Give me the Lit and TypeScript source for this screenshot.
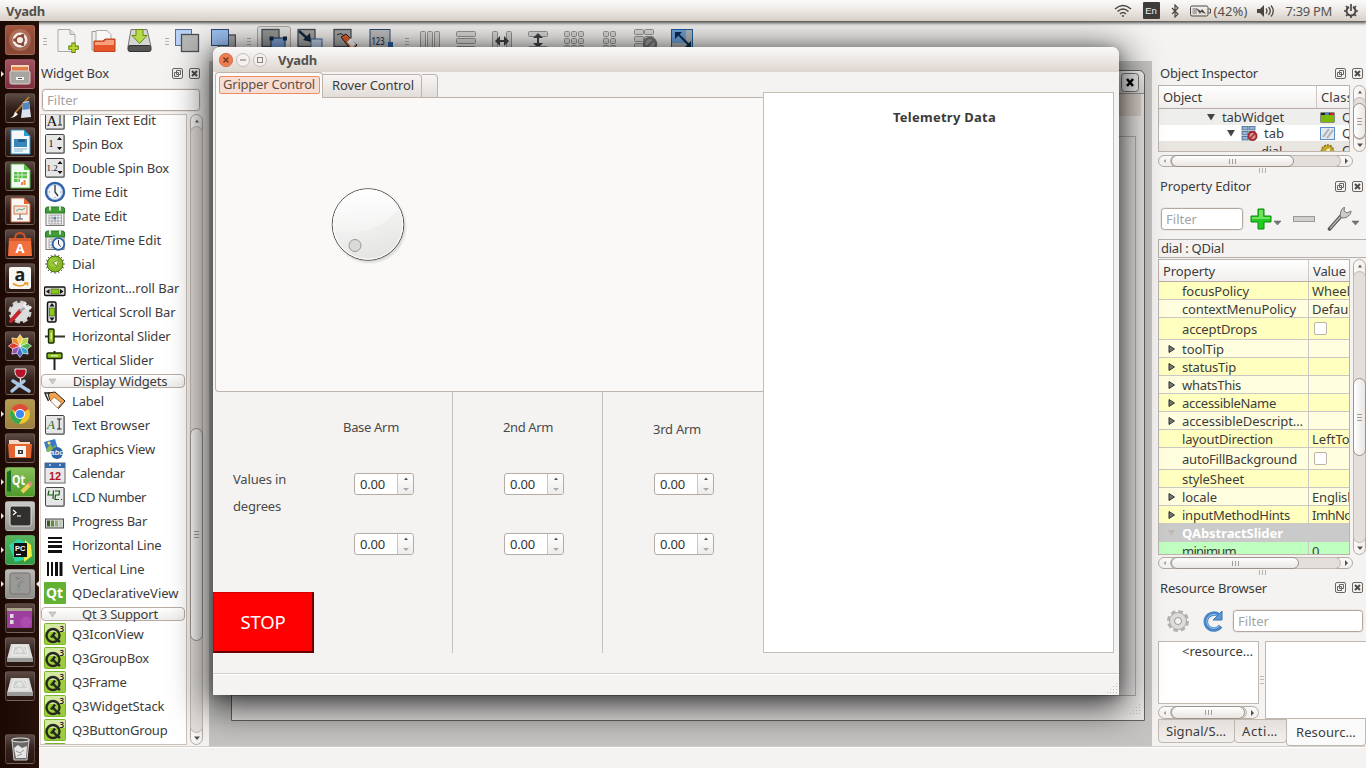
import { LitElement, html, css, svg, nothing } from "lit";
import { customElement, property, query } from "lit/decorators.js";
import { styleMap } from "lit/directives/style-map.js";
import { classMap } from "lit/directives/class-map.js";

/** A single line of text whose tracking is tuned so that it spans `w` pixels. */
@customElement("ui-text")
class UiText extends LitElement {
  @property({ type: Number }) w = 0;
  @property() t = "";
  @query("span") span!: HTMLSpanElement;
  static styles = css`
    :host { display: inline-block; white-space: pre; flex: none; }
    span { display: inline-block; white-space: pre; }
  `;
  firstUpdated() {
    if (!this.w) return;
    const natural = this.span.getBoundingClientRect().width;
    this.span.style.letterSpacing = (this.w - natural) / this.t.length + "px";
  }
  render() { return html`<span>${this.t}</span>`; }
}

const tx = (t: string, w = 0, cls = "") => html`<ui-text class=${cls} .t=${t} .w=${w}></ui-text>`;

/* 22px icons of the widget list */
const wrap22 = (body: unknown) => html`<svg class="wi" width="22" height="22" viewBox="0 0 22 22">${body}</svg>`;
const card = svg`<rect x="1.5" y="1.5" width="19.500" height="19.500" rx="1.5" fill="#aaa"/><rect x="1.5" y="1.5" width="18.500" height="18.500" rx="1" fill="#e6e6e6" stroke="#444"/>`;
const calGrid = svg`<rect x="2" y="4" width="18" height="16.5" fill="#f4f4f4" stroke="#777"/><path d="M1.5 8V4q0-2 2-2h15q2 0 2 2v4z" fill="#3f9d35" stroke="#2c7a25"/><path d="M6 .5v5M16 .5v5" stroke="#ddd" stroke-width="2"/><path d="M5 10h13M5 13h13M5 16h13M5 19h13M5 10v9M8 10v9M11 10v9M14 10v9M17.500 10v9" stroke="#999" stroke-width=".8"/>`;
const icons: Record<string, unknown> = {
  plain: svg`${card}<text x="2.500" y="16.500" font-family="Liberation Serif" font-size="15" fill="#111">A</text><path d="M14 5h4M16 5v11M14 16h4" stroke="#222" fill="none"/>`,
  spin: svg`${card}<text x="4.500" y="14" font-family="Liberation Serif" font-size="10" fill="#111">1</text><path d="M13 7l2.500-3 2.500 3zM13 14l2.500 3 2.500-3z" fill="#111"/>`,
  dspin: svg`${card}<text x="2.500" y="14" font-family="Liberation Serif" font-size="9" fill="#111">1.2</text><path d="M13.500 7l2.500-3 2.500 3zM13.500 14l2.500 3 2.500-3z" fill="#111"/>`,
  time: svg`<circle cx="11" cy="11" r="9" fill="#f3f6fa" stroke="#2d62a4" stroke-width="2.400"/><circle cx="11" cy="11" r="7.500" fill="none" stroke="#9ab8dc" stroke-width=".8"/><path d="M11 4v7l3 4" stroke="#333" stroke-width="1.300" fill="none"/><path d="M5 11h1M16 11h1M11 16v1" stroke="#777"/>`,
  date: svg`${calGrid}<rect x="9.500" y="12" width="2.500" height="2.500" fill="#4d86d6"/>`,
  datetime: svg`${calGrid}<circle cx="14.500" cy="15" r="5.800" fill="#f3f6fa" stroke="#2d62a4" stroke-width="1.800"/><path d="M14.500 11v4l2 2.500" stroke="#333" fill="none"/>`,
  dial: svg`<g stroke="#555" stroke-width=".9"><path d="M11 1v20M1 11h20M4 4l14 14M18 4L4 18M7 2l8 18M15 2L7 20M2 7l18 8M2 15l18-8"/></g><circle cx="11" cy="11" r="8" fill="#88bb22" stroke="#4d6f10"/><circle cx="10" cy="9.500" r="5" fill="#a4cf48" opacity=".7"/><path d="M14.500 7l-2 6.500-1.500-2.500-2.500-1z" fill="#eef8cc" stroke="#55741a" stroke-width=".6"/>`,
  hscroll: svg`<rect x=".5" y="10" width="20.500" height="8.500" rx="1" fill="#ddd" stroke="#111" stroke-width="1.300"/><path d="M5.500 12v5L2 14.500zM16 12v5l3.500-2.500z" fill="#111"/><rect x="7" y="12" width="8" height="5" fill="#8cc61c" stroke="#335500" stroke-width=".6"/>`,
  vscroll: svg`<rect x="3.500" y="1" width="8.500" height="20" rx="1.500" fill="#ddd" stroke="#111" stroke-width="1.500"/><path d="M5.500 5.500h5L8 2zM5.500 16.500h5L8 20z" fill="#111"/><rect x="5.500" y="7" width="5" height="8" fill="#8cc61c" stroke="#335500" stroke-width=".6"/>`,
  hslider: svg`<path d="M1 11.500h20" stroke="#333" stroke-width="2"/><rect x="4.500" y="4" width="5.500" height="14" rx="1" fill="#8fbf26" stroke="#1d2b00" stroke-width="1.400"/><path d="M7.200 7.500v7" stroke="#e8f6b8" stroke-width="1.200"/>`,
  vslider: svg`<path d="M10.500 2v19" stroke="#222" stroke-width="2"/><rect x="3" y="4" width="15" height="5.500" rx="1" fill="#8fbf26" stroke="#1d2b00" stroke-width="1.400"/><path d="M7 6.800h7" stroke="#e8f6b8" stroke-width="1.200"/>`,
  label: svg`<path d="M4 3l7-1 10 9-6.500 7.500-9-9z" fill="#f0a24c" stroke="#222"/><path d="M10 7l7.500 6-4 5-7-7z" fill="#fff" stroke="#a85a1c" stroke-width=".7"/><path d="M4.500 11Q2 6 1 3h5" stroke="#222" stroke-width="1.400" fill="none"/>`,
  browser: svg`${card}<text x="3" y="15" font-family="Liberation Serif" font-style="italic" font-size="13" fill="#1d6b22">A</text><path d="M13 5h4.500M15.200 5v10M13 15h4.500" stroke="#222" fill="none"/>`,
  gview: svg`<path d="M0 4l11-3 3 10-11 3z" fill="#3a78c8"/><path d="M2 12l4-6 3 4 2-3 3 4-11 3z" fill="#8bb84a"/><circle cx="5" cy="5" r="1.500" fill="#ffe36b"/><circle cx="13" cy="15" r="6" fill="#2d62a4"/><text x="6" y="17" font-family="Liberation Sans" font-style="italic" font-size="8" font-weight="bold" fill="#dfe9f5">abc</text>`,
  calendar: svg`<rect x="1" y="1" width="20" height="20" fill="#e9e9e9" stroke="#666"/><rect x="1" y="1" width="20" height="5" fill="#3469ad"/><path d="M5 3h2M15 3h2" stroke="#cfdded" stroke-width="1.500"/><text x="5" y="17.500" font-family="Liberation Sans" font-weight="bold" font-size="11" fill="#b5151c">12</text>`,
  lcd: svg`${card}<path d="M5 4.500l-1 4.500h5M9.500 4.500L9 13M11 5h4.500L15 9H11.500L11 13.500h4M17.500 13v1" stroke="#155a18" stroke-width="1.200" fill="none"/>`,
  progress: svg`<rect x="1.500" y="9" width="18" height="9" fill="#d4d8d0" stroke="#444"/><rect x="3" y="10.500" width="3" height="6" fill="#3f5c1e"/><rect x="7" y="10.500" width="3" height="6" fill="#66884a"/><rect x="11" y="10.500" width="3" height="6" fill="#92ac80"/><rect x="15" y="10.500" width="3" height="6" fill="#bccbb2"/>`,
  hline: svg`<path d="M4 4h14M4 8h14" stroke="#111" stroke-width="1.800"/><path d="M4 12.500h14M4 17.500h14" stroke="#111" stroke-width="3"/>`,
  vline: svg`<path d="M4 4v14M8 4v14" stroke="#111" stroke-width="2"/><path d="M12.500 4v14M17 4v14" stroke="#111" stroke-width="3"/>`,
  qt: svg`<rect width="22" height="22" rx="1" fill="#62b132"/><text x="2" y="16" font-family="Noto Sans" font-weight="bold" font-size="15" textLength="17" lengthAdjust="spacingAndGlyphs" fill="#fff">Qt</text>`,
  q3: svg`<rect x=".5" y=".5" width="21" height="21" rx="1" fill="#9ccb3b" stroke="#7db32a"/><rect x="1" y="1" width="20" height="8" fill="#d3e8a2"/><circle cx="9" cy="12.500" r="6.500" fill="none" stroke="#242820" stroke-width="2.400"/><path d="M7 14.500l4-5M9 12.500l2.500 3L16 19" stroke="#242820" stroke-width="2.400" fill="none"/><text x="15.500" y="8.500" font-family="Noto Sans" font-weight="600" font-size="8" fill="#222">3</text>`,
};

/* launcher tiles, 30px */
const L: Record<string, { bg: string; body: unknown; run?: boolean }> = {
  ubuntu: { bg: "linear-gradient(#a4553c,#8d4633 50%,#8b4937)", body: svg`<circle cx="15" cy="15" r="11" fill="#dcb5a2" opacity=".3"/><circle cx="15" cy="15" r="7.500" fill="#f6ece7"/><circle cx="15" cy="15" r="4" fill="none" stroke="#8d4633" stroke-width="1.800"/><g fill="#8d4633"><circle cx="9.800" cy="15" r="1.700"/><circle cx="17.600" cy="10.500" r="1.700"/><circle cx="17.600" cy="19.500" r="1.700"/></g>` },
  files: { bg: "linear-gradient(#a55360,#7c2d3c)", run: true, body: svg`<path d="M6 6h18v8H6z" fill="#f2d5b8"/><path d="M7 8h16v6H7z" fill="#e07c45"/><rect x="5" y="12" width="20" height="13" rx="1.500" fill="#a8a5a0" stroke="#d6d4d0"/><path d="M11 18h8v3h-8z" fill="#eee"/><path d="M13 19.500h4" stroke="#555"/>` },
  gimp: { bg: "", body: svg`<path d="M10 20L24 4" stroke="#b97f3d" stroke-width="1.800"/><path d="M4 25q4 0 6-6l3 2q-3 4-9 4" fill="#f4f4f4"/><path d="M18 9l6-1 2 16-10 1z" fill="#dde3ea"/><path d="M18 10l6-1 .7 7-7.200 1z" fill="#5487c0"/>` },
  writer: { bg: "", body: svg`<path d="M6 3h13l6 6v18H6z" fill="#f5f7f9" stroke="#2d8fc9"/><path d="M19 3l6 6h-6z" fill="#2b9cd8"/><rect x="9" y="12" width="13" height="8" fill="#3a88bb"/><path d="M13 12h7v3h-7z" fill="#235f8c"/><path d="M9 22h13M9 24h9" stroke="#85b7d6"/>` },
  calc: { bg: "", body: svg`<path d="M6 3h13l6 6v18H6z" fill="#f5f9f3" stroke="#54b948"/><path d="M19 3l6 6h-6z" fill="#54c53b"/><path d="M9 11h13v10H9z" fill="#5fbf4c"/><path d="M9 14h13M9 17.500h13M13 11v10M17 11v10" stroke="#eaf8e6" stroke-width=".8"/><path d="M15 18h7v6h-7z" fill="#fff"/><path d="M16 24v-3h2v3zM18.500 24v-5h2v5z" fill="#f0803c"/>` },
  impress: { bg: "", body: svg`<path d="M6 3h13l6 6v18H6z" fill="#faf6f3" stroke="#c36138"/><path d="M19 3l6 6h-6z" fill="#e56530"/><rect x="9" y="11" width="13" height="8" fill="#f7e4d8" stroke="#cf7a50"/><path d="M15 19v5M12 24h6" stroke="#556"/><path d="M11 16l3-2 3 1 3-2" stroke="#5a8" fill="none"/>` },
  software: { bg: "", body: svg`<path d="M10 10q0-6 5-6t5 6" stroke="#c8542b" stroke-width="2" fill="none"/><path d="M4 9h22l1 18H3z" fill="#f0703e"/><path d="M4 9h22v3H4z" fill="#d45a2b"/><text x="10.500" y="23.500" font-family="Noto Sans" font-weight="bold" font-size="13" fill="#fff">A</text>` },
  amazon: { bg: "", body: svg`<rect x="4" y="4" width="22" height="22" rx="2" fill="#f7f7f5"/><text x="9.500" y="18" font-family="Noto Sans" font-weight="bold" font-size="18" fill="#222">a</text><path d="M8 20.500q7 5 13 0M19 20h3.500v2.500" stroke="#f29a1f" stroke-width="1.600" fill="none"/>` },
  settings: { bg: "", body: svg`<circle cx="15" cy="15" r="10" fill="none" stroke="#cfcfcf" stroke-width="3" stroke-dasharray="5 2.850"/><circle cx="15" cy="15" r="9.500" fill="#dcdcdc"/><path d="M6 24l9-10" stroke="#c6252b" stroke-width="4" stroke-linecap="round"/><path d="M15 14l6-4" stroke="#aaa" stroke-width="2.500"/><path d="M21 5.500q-3 3 0 5t5-1" stroke="#eee" stroke-width="2.500" fill="none"/>` },
  photos: { bg: "", body: svg`${[["#f7c948", 0], ["#f08a24", 315], ["#dd3c2c", 270], ["#9a4fb0", 225], ["#4a68c8", 180], ["#37a8cf", 135], ["#52b54d", 90], ["#b6d54b", 45]].map(([c, a]) => svg`<path d="M15 15l-3.200-7 3.200-4.500 3.200 4.500z" fill=${c} stroke="#fff" stroke-width=".6" transform="rotate(${a} 15 15)"/>`)}` },
  wine: { bg: "", body: svg`<path d="M10 4h11q1 8-5.500 9Q9 12 10 4z" fill="#b3132b" stroke="#eee"/><path d="M15.500 13v8" stroke="#eee" stroke-width="1.500"/><path d="M7 26L19 16M24 26L8 16" stroke="#a9c7e2" stroke-width="3.500" stroke-linecap="round"/>` },
  chrome: { bg: "linear-gradient(#b49a4e,#9d8340)", run: true, body: svg`<circle cx="15" cy="15" r="10" fill="#f0c52f"/><path d="M15 15L6.340 10A10 10 0 0 1 23.660 10z" fill="#dd4b3a"/><path d="M6.340 10A10 10 0 0 0 14 25l4.500-8-7.500 1z" fill="#35a852"/><circle cx="15" cy="15" r="5" fill="#fff"/><circle cx="15" cy="15" r="4" fill="#4285f4"/>` },
  shot: { bg: "", body: svg`<path d="M4 7h9l2 2h10v5H4z" fill="#f3d7c3"/><path d="M3 11h24l-1 14H4z" fill="#e2642f"/><rect x="10" y="13" width="11" height="11" fill="#f6f4f1"/><path d="M13 17h5v4h-5z" fill="#333"/><circle cx="15.500" cy="19" r="1" fill="#eee"/>` },
  qtc: { bg: "linear-gradient(#86c058,#4f9b2c)", run: true, body: svg`<path d="M2 5l4-2v22l-4-1z" fill="#1d6b22"/><text x="7" y="18" font-family="Noto Sans" font-size="15" font-weight="bold" textLength="13" lengthAdjust="spacingAndGlyphs" fill="#fff">Qt</text><path d="M17 25l8-8" stroke="#f0cf58" stroke-width="4"/><path d="M24 18l2.500-2.500" stroke="#d98c7a" stroke-width="4"/>` },
  term: { bg: "linear-gradient(#c9c9c7,#94928e)", run: true, body: svg`<rect x="5" y="5" width="21" height="20" rx="2" fill="#31302c" stroke="#ddd"/><path d="M8 9l3 2.500L8 14M12 15h4" stroke="#fff" stroke-width="1.200" fill="none"/>` },
  pycharm: { bg: "linear-gradient(#58b35c,#2f9c46)", run: true, body: svg`<path d="M4 10l9-6 8 3 5 7-3 10-13 3z" fill="#2fd6a4"/><path d="M20 5l6 5 1 11-8 6z" fill="#f3ee3f"/><rect x="9" y="8" width="13" height="14" fill="#111"/><text x="10" y="15.500" font-family="Liberation Sans" font-weight="bold" font-size="7.500" fill="#fff">PC</text><path d="M11 19.500h5" stroke="#fff" stroke-width="1.200"/>` },
  unknown: { bg: "linear-gradient(#bcbab7,#8f8d8a)", run: true, body: svg`<rect x="5" y="4" width="20" height="21" rx="2" fill="#9b9996" stroke="#777572"/><text x="10.500" y="21" font-family="Noto Sans" font-size="18" fill="#c9c7c4" stroke="#666" stroke-width=".6">?</text>` },
  desk: { bg: "", body: svg`<rect x="2" y="6" width="25" height="19" fill="#9d3f9f"/><rect x="2" y="5" width="25" height="3" fill="#aaa48f"/><rect x="5" y="11" width="3.500" height="4" fill="#ddd"/><rect x="5" y="17" width="3.500" height="4" fill="#ddd"/><circle cx="21" cy="19" r="5.500" fill="#d26bd2" opacity=".3"/>` },
  disk: { bg: "", body: svg`<path d="M6 7h18l4 15H2z" fill="#dcdcda"/><path d="M2 21h26v4H2z" fill="#9b9b99"/><path d="M9 9h12l2 9H7z" fill="#cfcfcd" stroke="#f2f2f2"/><path d="M10 16l4-5M18 10l3 6" stroke="#eee"/><circle cx="15" cy="13.500" r="2.500" fill="#e4e4e2"/>` },
  trash: { bg: "", body: svg`<path d="M7 6h17l-2 20H9z" fill="#6c6a67" stroke="#ccc"/><ellipse cx="15.500" cy="6" rx="9" ry="2" fill="#4c4845" stroke="#eee"/><path d="M9 14l4-3 4 3 5-2-1 12H11z" fill="#e6e6e6"/><path d="M11 17l4 2 4-3M12 22l5-2" stroke="#999" fill="none"/>` },
};
const launcherOrder = ["ubuntu", "files", "gimp", "writer", "calc", "impress", "software", "amazon", "settings", "photos", "wine", "chrome", "shot", "qtc", "term", "pycharm", "unknown", "desk", "disk", "disk"];

const widgetRows: [string, string, number][] = [
  ["plain", "Plain Text Edit", 84], ["spin", "Spin Box", 51], ["dspin", "Double Spin Box", 97], ["time", "Time Edit", 55.5],
  ["date", "Date Edit", 55], ["datetime", "Date/Time Edit", 89], ["dial", "Dial", 23], ["hscroll", "Horizont…roll Bar", 107.500],
  ["vscroll", "Vertical Scroll Bar", 103.500], ["hslider", "Horizontal Slider", 98.500], ["vslider", "Vertical Slider", 81.500],
  ["", "Display Widgets", 94.500],
  ["label", "Label", 32], ["browser", "Text Browser", 78], ["gview", "Graphics View", 83], ["calendar", "Calendar", 53],
  ["lcd", "LCD Number", 74], ["progress", "Progress Bar", 75], ["hline", "Horizontal Line", 89.500], ["vline", "Vertical Line", 72.500],
  ["qt", "QDeclarativeView", 106.500], ["", "Qt 3 Support", 76],
  ["q3", "Q3IconView", 71.500], ["q3", "Q3GroupBox", 77], ["q3", "Q3Frame", 54.500], ["q3", "Q3WidgetStack", 92.500], ["q3", "Q3ButtonGroup", 95.500], ["q3", "", 0],
];

/* name, width, value, value width, row height, has children, tint */
const props: [string, number, string, number, number, boolean, string][] = [
  ["focusPolicy", 67, "Wheel", 38, 18, false, "a"], ["contextMenuPolicy", 114, "Default", 44, 18, false, "b"],
  ["acceptDrops", 75, "#", 0, 22, false, "a"], ["toolTip", 42, "", 0, 18, true, "b"], ["statusTip", 54, "", 0, 18, true, "a"],
  ["whatsThis", 59, "", 0, 18, true, "b"], ["accessibleName", 94, "", 0, 18, true, "a"], ["accessibleDescript…", 121, "", 0, 18, true, "b"],
  ["layoutDirection", 91, "LeftToRight", 70, 18, false, "a"], ["autoFillBackground", 115, "#", 0, 22, false, "b"],
  ["styleSheet", 62, "", 0, 18, false, "a"], ["locale", 35, "English", 43, 18, true, "b"], ["inputMethodHints", 108, "ImhNone", 54, 18, true, "a"],
  ["QAbstractSlider", 101, "", 0, 18, true, "h"], ["minimum", 54, "0", 8, 18, false, "g"],
];

@customElement("scroll-bar")
class ScrollBar extends LitElement {
  @property({ type: Boolean, reflect: true }) vertical = false;
  @property({ type: Number }) before = 0;
  @property({ type: Number }) thumb = 50;
  static styles = css`
    :host { display: flex; box-sizing: border-box; border: 1px solid #b5aaa2; border-radius: 7px; background: linear-gradient(#fbfaf9, #f1eeec); height: 13px; }
    :host([vertical]) { flex-direction: column; width: 13px; height: auto; background: linear-gradient(90deg, #fbfaf9, #f1eeec); }
    .btn { flex: 0 0 12px; display: flex; align-items: center; justify-content: center; }
    .track { flex: 1; display: flex; min-width: 0; min-height: 0; background: #e4dfdb; border-radius: 6px; box-shadow: 0 0 0 1px #c3bab3; }
    :host([vertical]) .track { flex-direction: column; }
    .thumb { flex: none; box-sizing: border-box; margin: -1px; border: 1px solid #9c928a; border-radius: 7px; display: flex; align-items: center; justify-content: center; gap: 2px; background: linear-gradient(#fff, #e9e6e3); }
    :host([vertical]) .thumb { flex-direction: column; background: linear-gradient(90deg, #fff, #e9e6e3); }
    .thumb i { width: 1px; height: 5px; background: #a39b94; }
    :host([vertical]) .thumb i { width: 5px; height: 1px; }
    .arrow { width: 6px; height: 6px; }
  `;
  render() {
    const d = this.vertical ? ["M1 4.500l2-3 2 3z", "M0 1.500h6l-3 3.500z"] : ["M4 1v4L1.500 3z", "M2 0v6l3-3z"];
    const axis = this.vertical ? "height" : "width";
    return html`
      <span class="btn"><svg class="arrow"><path d=${d[0]} fill=${this.vertical ? "#66605a" : "#aaa39c"} /></svg></span>
      <span class="track">
        <span style=${styleMap({ [axis]: this.before + "px" })}></span>
        <span class="thumb" style=${styleMap({ [axis]: this.thumb + "px" })}><i></i><i></i><i></i></span>
      </span>
      <span class="btn"><svg class="arrow"><path d=${d[1]} fill="#55504b" /></svg></span>`;
  }
}

@customElement("app-root")
class AppRoot extends LitElement {
  static styles = css`
    * { box-sizing: border-box; }
    :host { display: flex; flex-direction: column; position: relative; width: 1366px; height: 768px; overflow: hidden; font: 13px/18px "Noto Sans", "Open Sans", sans-serif; color: #3c3c3c; background: #f4f3f2; }
    svg { display: block; flex: none; }

    .panel { flex: 0 0 21px; display: flex; align-items: center; padding: 0 8px 0 6px; background: linear-gradient(#faf9f7 5%, #ece8e4 50%, #d8cfc6); position: relative; z-index: 2; box-shadow: 0 1px 3px 1px rgba(30,30,30,.8); color: #55514c; }
    .panel b { flex: 1; line-height: 20px; }
    .tray { display: flex; align-items: center; }
    .lang { width: 17px; height: 17px; margin: 0 11px; border-radius: 1px; background: #3e3c3a; color: #eee; font: 9.5px/18px "Liberation Sans", sans-serif; text-align: center; }
    .batt { margin: 0 3px 0 11px; }
    .vol { margin: 0 12px 0 9px; }
    .gear { margin-left: 12px; }

    .desk { flex: 1; display: flex; min-height: 0; }
    .launcher { position: relative; z-index: 2; flex: 0 0 39px; background: linear-gradient(90deg, #1c0904, #25100a); display: flex; flex-direction: column; align-items: center; gap: 4px; padding-top: 4px; }
    .tile { position: relative; flex: none; width: 30px; height: 30px; border-radius: 3px; border: 1px solid rgba(180,160,150,.3); background: linear-gradient(#5b4a45, #34201b 50%, #281610); }
    .tile svg { margin: -1px; }
    .run::before { content: ""; position: absolute; left: -5px; top: 11px; border: 3px solid transparent; border-left-color: #e6e3e0; border-right: 0; }
    .focus::after { content: ""; position: absolute; right: -5px; top: 11px; border: 3px solid transparent; border-right-color: #e6e3e0; border-left: 0; }
    .bottom { margin-top: 29px; }

    .ide { flex: 1; display: flex; flex-direction: column; min-width: 0; }
    .tools { flex: 0 0 40px; display: flex; align-items: center; padding-left: 4px; }
    .tools .grip { flex: none; width: 4px; height: 7px; border-top: 1px solid #aaa; border-bottom: 1px solid #aaa; background: linear-gradient(transparent 2px, #bbb 2px, #bbb 3px, transparent 3px); }
    .tools .g1 { margin-right: 3px; } .tools .g2 { margin: 0 0 0 7px; } .tools .g3 { margin: 0 5px 0 6px; } .tools .g4 { margin: 0 10px 0 5px; }
    .tools .at { flex: none; display: flex; align-items: center; justify-content: center; width: 36px; height: 36px; }
    .tools .on { width: 34px; height: 34px; border: 1px solid #b0a8a1; border-radius: 3px; background: rgba(0,0,0,.05); margin: 4px 1px 0; padding-bottom: 4px; }
    .cols { flex: 1; display: flex; min-height: 0; border-bottom: 1px solid #d4cec8; }
    .status { flex: 0 0 21px; border-top: 1px solid #fff; }

    .wbox { flex: 0 0 170px; display: flex; flex-direction: column; padding: 2px 6px 1px 1px; }
    .dockt { display: flex; align-items: center; height: 20px; padding: 0 2px 0 2px; }
    .wbox .dockt { padding: 0 3px 0 1px; }
    .dockt .sp { flex: 1; }
    .dockt svg + svg { margin-left: 6px; }
    .edit { display: flex; align-items: center; height: 22px; border: 1px solid #b3a79d; border-radius: 3.5px; background: #fff; color: #a3a3a3; padding-left: 4px; box-shadow: 0 0 0 1px #eae6e3; }
    .wbox .edit { margin: 6px 3px 3px 2px; }
    .listrow { flex: 1; display: flex; gap: 3px; min-height: 0; }
    .wlist { flex: 0 0 147px; overflow: hidden; background: #fff; border: 1px solid #c9c0b8; border-left-color: #ddd7d1; }
    .wrow { display: flex; align-items: center; gap: 6px; height: 24px; padding: 0 0 0 4px; margin-left: -1px; }
    .wlist .wrow:first-child { margin-top: -7px; }
    .wcat { display: flex; align-items: center; margin: 2px 1px 1px 0; height: 14px; border: 1px solid #b8aea6; border-radius: 4px; background: linear-gradient(#fff, #efedeb); position: relative; }
    .wcat svg { margin-left: 6px; }
    .wcat .lab { flex: 1; text-align: center; height: 18px; padding-right: 1px; }

    .mdi { flex: 1; min-width: 0; background: #c5c4c3; padding: 9px 7px 25px 22px; display: flex; }
    .sub { flex: 1; border: 1px solid #66625e; border-radius: 6px 6px 0 0; background: #eceae9; display: flex; flex-direction: column; }
    .subt { flex: 0 0 23px; display: flex; justify-content: flex-end; align-items: center; padding-right: 4px; border-bottom: 1px solid #99928c; border-radius: 6px 6px 0 0; background: linear-gradient(#fafafa, #dedcda); }
    .subm { flex: 0 0 22px; background: #dbd2ca; margin-right: 3px; }
    .subc { flex: 1; margin: 20px 8px 0 0; border: 1px solid #bbb3ac; border-bottom-color: #aaa; }
    .subs { flex: 0 0 24px; display: flex; align-items: flex-end; justify-content: flex-end; padding: 5px 3px; }

    .dock { position: relative; flex: 0 0 214px; display: flex; flex-direction: column; padding: 3px 0 0 6px; }
    .dock > .dockt { padding-right: 3px; }
    .hand { height: 5px; width: 7px; margin: 1px auto 4px 101px; border: 1px solid #b8b1aa; border-width: 0 1px; background: linear-gradient(90deg, transparent 2px, #b8b1aa 2px, #b8b1aa 3px, transparent 3px); }
    .hrow { display: flex; gap: 3px; }
    .oirow { margin-top: 3px; }
    .hs { width: 195px; margin-top: 2px; }
    .oirow + .hs { margin-top: 3px; }
    .tab { flex: 0 0 192px; border: 1px solid #bdb3aa; background: #fff; overflow: hidden; }
    .th { display: flex; height: 22px; border-bottom: 1px solid #b9aea5; background: linear-gradient(#fff, #f1efed); line-height: 22px; }
    .th span:first-child { flex: none; border-right: 1px solid #cfc8c2; padding-left: 4px; }
    .th span:last-child { padding-left: 4px; }
    .oi { height: 67px; }
    .oi .th { height: 23px; line-height: 23px; }
    .oi .th span:first-child { width: 158px; }
    .trow { display: flex; align-items: center; height: 16px; }
    .trow .name { flex: none; width: 161px; display: flex; align-items: center; }
    .trow .cls { display: flex; align-items: center; gap: 7px; }
    .t1 { background: #eeeeed; } .t3 { background: #e9e5e1; }
    .n1 { padding-left: 48px; gap: 7px; } .n2 { padding-left: 68px; gap: 6px; } .n3 { padding-left: 102px; padding-top: 4px; }
    .t3 .cls { padding-top: 2px; }
    .pe-tools { display: flex; align-items: center; height: 22px; margin: 13px 0 9px 3px; }
    .pe-tools .edit { width: 82px; margin-right: 7px; }
    .crumb { height: 19px; border: 1px solid #b5b0ac; border-right: 0; padding: 0 0 0 2px; margin-bottom: 1px; line-height: 17px; }
    .pe { height: 296px; }
    .pe .th span:first-child { width: 150px; }
    .prow { display: flex; border-bottom: 1px solid #cac8c4; }
    .prow .k { flex: 0 0 150px; border-right: 1px solid #cac8c4; display: flex; align-items: center; padding-left: 9px; }
    .prow .k .ex { width: 14px; flex: none; }
    .prow .v { display: flex; align-items: center; padding-left: 3px; white-space: nowrap; }
    .a { background: #ffffbf; } .b { background: #ffffdf; } .g { background: #bfffbf; }
    .h { background: #cacaca; color: #fff; font-weight: bold; } .h .k { border-color: #cacaca; }
    .chk { width: 13px; height: 13px; margin-left: 2px; border: 1px solid #bdb4ac; border-radius: 2px; background: #fff; }
    .rb-tools { display: flex; align-items: center; height: 24px; margin: 12px 3px 8px 8px; }
    .rb-tools .edit { flex: 1; margin-left: 9px; }
    .rb { display: flex; height: 78px; }
    .rb .l { width: 101px; display: flex; flex-direction: column; }
    .rb .l .box { height: 63px; margin-bottom: 2px; padding-left: 23px; }
    .box { border: 1px solid #c0b7af; background: #fff; }
    .rb .r { flex: 1; border-right: 0; }
    .split { width: 6px; display: flex; align-items: center; justify-content: center; }
    .split i { width: 4px; height: 8px; border-top: 1px solid #bbb; border-bottom: 1px solid #bbb; background: linear-gradient(transparent 2px, #bbb 2px, #bbb 3px, transparent 3px); }
    .dtabs { display: flex; align-items: flex-start; }
    .dtab { height: 24px; border: 1px solid #c0b7af; border-radius: 0 0 4px 4px; background: linear-gradient(#e4dfdb, #f2f0ee); padding: 2px 0 0 7px; margin-right: -1px; }
    .dtab.sig { width: 77px; } .dtab.act { width: 53px; }
    .dtab.cur { height: 27px; padding: 4px 0 0 9px; background: #fbfafa; margin-right: 0; flex: 1; border-top: 0; }

    .win { position: absolute; z-index: 1; left: 213px; top: 47px; width: 906px; height: 648px; border-radius: 7px 7px 0 0; background: #f5f3f2; display: flex; flex-direction: column; box-shadow: 0 8px 36px 6px rgba(0,0,0,.72), 0 2px 12px rgba(0,0,0,.25); }
    .wtitle { flex: 0 0 25px; display: flex; align-items: center; gap: 3px; padding-left: 6px; border-radius: 7px 7px 0 0; background: linear-gradient(#faf9f8, #ddd6cf); color: #56524e; }
    .wtitle b { margin-left: 8px; padding-top: 1px; }
    .left { flex: 0 0 550px; display: flex; flex-direction: column; }
    .tabsr { display: flex; align-items: flex-end; height: 26px; padding-left: 2px; margin-bottom: -1px; }
    .tabx { height: 24px; border: 1px solid #bdb3aa; border-left: 0; border-radius: 0 4px 0 0; background: linear-gradient(#f7f5f4, #e2ddd9); padding: 1px 0 0 9px; }
    .tabx.cur { height: 26px; width: 108px; border: 1px solid #bdb3aa; border-bottom: 0; border-radius: 4px 4px 0 0; background: #fbfaf9; padding: 3px; z-index: 0; position: relative; }
    .foc { width: 101px; height: 18px; border: 1px solid #ef8d66; border-radius: 2px; background: #f8ddd2; padding-left: 3px; line-height: 15px; color: #5d504a; }
    .rover { width: 99px; } .blank { width: 16px; }
    .pane { height: 295px; margin-left: 2px; border: 1px solid #bdb3aa; border-right: 0; border-radius: 0 0 0 4px; background: #faf9f8; padding: 87px 0 0 112px; }
    .arms { flex: 1; display: grid; grid-template-columns: 240px 150px 1fr; color: #4a4a4a; }
    .arm { padding-top: 25px; border-right: 1px solid #c4c1be; display: flex; flex-direction: column; }
    .arm:last-child { border-right: 0; }
    .arm.first { display: grid; grid-template-columns: 141px 99px; grid-template-rows: 174px 1fr; padding-top: 0; }
    .spins { display: flex; flex-direction: column; gap: 38px; margin-top: 36px; }
    .name { line-height: 20px; }
    .pad { padding-left: 50px; }
    .pad + .spins { padding-left: 51px; }
    .low { padding-top: 2px; }
    .low + .spins { margin-top: 34px; }
    .base { margin: 25px 0 0 -11px; }
    .spin { width: 60px; height: 22px; display: flex; border: 1px solid #b5aba2; border-radius: 3px; background: #fff; color: #333; }
    .spin span { flex: 1; border-right: 1px solid #ccc5be; padding-left: 5px; line-height: 20px; }
    .spin div { width: 15px; display: flex; justify-content: center; align-items: center; background: linear-gradient(#fff, #eeecea); border-radius: 0 3px 3px 0; }
    .vals { line-height: 27px; padding: 74px 0 0 20px; }
    .stop { align-self: end; width: 101px; height: 61px; background: #f00; border: 1px solid #600; border-width: 1px 2px 2px 1px; border-color: #d00000 #600 #600 #d00000; color: #fff; font-size: 18.500px; line-height: 58px; text-align: center; }
    .tele { width: 351px; height: 561px; margin-top: 20px; border: 1px solid #c6bdb5; background: #fff; padding: 15px 0 0 12px; text-align: center; color: #3c3a38; }
    .wstat { flex: 0 0 22px; border-top: 1px solid #d3cfcb; display: flex; justify-content: flex-end; align-items: flex-end; padding: 1px; box-shadow: inset 0 1px #fff; }
    .wfill { flex: none; height: 20px; }
    .mainarea { flex: 0 0 581px; display: flex; }
  `;

  private floatClose(c = "#6a6560") {
    return html`<svg width="11" height="11" viewBox="0 0 11 11"><rect x=".5" y=".5" width="10" height="10" rx="1.500" fill="none" stroke=${c}/><path d="M4.500 2.500h4v4h-4zM2.500 4.500h4v4h-4z" fill="none" stroke=${c}/></svg>
    <svg width="11" height="11" viewBox="0 0 11 11"><rect x=".5" y=".5" width="10" height="10" rx="1.500" fill="none" stroke=${c}/><path d="M3 3l5 5M8 3l-5 5" stroke="#504b47" stroke-width="2"/></svg>`;
  }
  private tile(k: string, extra = "") {
    const t = L[k];
    return html`<div class=${classMap({ tile: true, run: !!t.run, focus: k === "unknown", bottom: extra === "bottom" })} style=${t.bg ? styleMap({ background: t.bg }) : nothing}><svg width="30" height="30" viewBox="0 0 30 30">${t.body}</svg></div>`;
  }
  private grip() {
    const dots: [number, number][] = [];
    for (let r = 0; r < 4; r++) for (let c = 3 - r; c < 4; c++) dots.push([c * 3, r * 3]);
    return html`<svg width="11" height="11">${dots.map(([x, y]) => svg`<rect x=${x} y=${y} width="1" height="1" fill="#c4c0bc"/>`)}</svg>`;
  }
  private spin() {
    return html`<div class="spin"><span>${tx("0.00", 25)}</span><div><svg width="6" height="16"><path d="M1 4l2-2.500L5 4z" fill="#555"/><path d="M0 12h6l-3 3z" fill="#aaa"/></svg></div></div>`;
  }
  private tool(body: unknown, cls = "") {
    return html`<span class="at ${cls}"><svg width="26" height="26" viewBox="0 0 26 26">${body}</svg></span>`;
  }
  private panel() {
    const c = "#4a4743";
    return html`<div class="panel"><b>${tx("Vyadh", 39)}</b><div class="tray">
      <svg width="18" height="14" viewBox="0 0 18 14" fill="none" stroke=${c} stroke-width="1.500"><path d="M1 5q8-7 16 0M3.500 7.500q5.500-5 11 0M6 10q3-3 6 0"/><circle cx="9" cy="12" r="1" fill=${c} stroke="none"/></svg>
      <span class="lang">En</span>
      <svg width="8" height="14" viewBox="0 0 8 14" fill="none" stroke=${c} stroke-width="1.200"><path d="M1 4l6 6-3 3V1l3 3-6 6"/></svg>
      <svg class="batt" width="21" height="12" viewBox="0 0 21 12" fill="none" stroke=${c}><rect x=".5" y="1" width="17.500" height="10" rx="1.500"/><path d="M18.500 4h2v4h-2"/><path d="M2.500 3h4.500v6H2.500z" fill="#aaa" stroke="none"/><path d="M6 3l5 3 1-2 4 5-5-2-1 2z" fill=${c} stroke="none"/></svg>
      ${tx("(42%)", 34)}
      <svg class="vol" width="17" height="14" viewBox="0 0 17 14"><path d="M0 5h3l4-4v12l-4-4H0z" fill=${c}/><path d="M9 4.500q2 2.500 0 5M11.500 3q3.500 4 0 8M14 1.500q4.500 5.500 0 11" fill="none" stroke=${c} stroke-width="1.300"/></svg>
      ${tx("7:39 PM", 46.5)}
      <svg class="gear" width="14" height="14" viewBox="0 0 14 14" fill="none" stroke=${c}><path d="M5 3a4.500 4.500 0 1 0 4 0" stroke-width="2"/><path d="M7 0v7" stroke-width="1.700"/><path d="M0 7h2M12 7h2M2 2l1.500 1.500M12 2l-1.500 1.500M2 12l1.500-1.500M12 12l-1.500-1.500M7 12v2" stroke-width="1.700"/></svg>
    </div></div>`;
  }
  private tools() {
    const g = "#989795";
    const tile = (x: number, y: number, w: number, h: number, f = "#dddcdb") => svg`<rect x=${x + .5} y=${y + .5} width=${w - 1} height=${h - 1} rx="1" fill=${f} stroke=${g}/>`;
    const grey = (c: string, x: number, y: number) => svg`<rect x=${x} y=${y} width="17" height="17" fill=${c} stroke="#4a5058" stroke-width="1.300"/>`;
    return html`<div class="tools"><i class="grip g1"></i>
      ${this.tool(svg`<path d="M3 1.500h12l5 5v17H3z" fill="#f3f3f2" stroke="#aaa"/><path d="M15 1.500v5h5" fill="#ddd" stroke="#aaa"/><path d="M18.500 14.500v10.500M13.300 19.700h10.500" stroke="#5c7a00" stroke-width="4.200"/><path d="M18.500 15.500v8.500M14.300 19.700h8.500" stroke="#b4d82e" stroke-width="2.600"/>`)}
      ${this.tool(svg`<path d="M1 3.500h8V22H1z" fill="#eee" stroke="#999"/><path d="M5 2.500h11l4 4v10H5z" fill="#f8f8f8" stroke="#aaa"/><path d="M3 13h9l2-2h10v12.500H3z" fill="#e8552a" stroke="#b8441f"/><path d="M4 14h9l2-2h8v5H4z" fill="#f7a07c"/>`)}
      ${this.tool(svg`<path d="M4 1.500h16l4 17H1z" fill="#d5d5d3" stroke="#777"/><rect x="1" y="17.500" width="23" height="6" rx="2" fill="#555" stroke="#333"/><path d="M9 1.500h7v6h4L12.500 15.500 5 7.500h4z" fill="#b5d94a" stroke="#678a0c"/>`)}
      <i class="grip g2"></i>
      ${this.tool(svg`<rect x="1.500" y="1.500" width="16" height="16" fill="#b9d1f5" stroke="#5a7090"/>${grey("#b8b8b7", 7.5, 6.500)}`)}
      ${this.tool(svg`${grey("#aaa", 8.5, 7)}<rect x="1.500" y="1.500" width="17" height="16" fill="#9fc3f5" stroke="#2f4d78"/>`)}
      <i class="grip g3"></i>
      ${this.tool(svg`${grey("#9b9b9a", 1, 1.5)}<rect x="10" y="10" width="14" height="13" fill="#7ea6dc" stroke="#17304f"/><path d="M8.500 8.500h4v4h-4zM22 8.500h4v4h-4z" fill="#102848"/>`, "on")}
      ${this.tool(svg`${grey("#a8a8a7", 1, 1.5)}<rect x="14" y="11" width="11" height="12" fill="#c3d6ef" stroke="#3b66a0"/><path d="M2 3l9 8" stroke="#14283f" stroke-width="2.400"/><path d="M14 14l-1-9-7 7z" fill="#14283f"/>`)}
      ${this.tool(svg`${grey("#a8a8a7", 1, 1.5)}<path d="M8 9l5-3 11 11-5 6z" fill="#e0612c" stroke="#222"/><path d="M14 14l4-4 5 6-4 4z" fill="#fff"/><path d="M4 7q5-3 7 1" stroke="#222" fill="none"/>`)}
      ${this.tool(svg`<rect x="1" y="1.500" width="20" height="21" fill="#c3c3c2" stroke="#2f4d78"/><text x="2.500" y="17" font-family="Noto Sans" font-size="10.500" font-weight="500" textLength="13" lengthAdjust="spacingAndGlyphs" fill="#12396f">123</text><path d="M13 19h6v-5h5v8H13z" fill="#2e62ac"/>`)}
      <i class="grip g4"></i>
      <svg width="290" height="26" viewBox="420 28 290 26">
        ${[421, 428, 435].map((x) => tile(x, 31, 6, 22))}
        ${[31, 38, 46].map((y) => tile(457, y, 20, 6))}
        ${tile(493, 31, 6, 20)}${tile(507, 31, 6, 20)}<path d="M496 41l5-5v4h4v-4l5 5-5 5v-4h-4v4z" fill="#444"/>
        ${tile(529, 31, 20, 6)}<path d="M539 33l5 5h-4v5h4l-5 5-5-5h4v-5h-4z" fill="#444"/>${tile(529, 46, 20, 6)}
        ${[0, 7, 14].map((a) => [0, 7, 14].map((b) => tile(565 + a, 31 + b, 6, 6)))}
        ${[0, 7].map((a) => [0, 7, 14].map((b) => tile(604 + a, 31 + b, 6, 6)))}
        ${[0, 10].map((a) => [0, 7, 14].map((b) => tile(635 + a, 29 + b, 10, 6)))}
        <circle cx="651" cy="44" r="6" fill="#a5a4a3" stroke="#777" stroke-width="2.500"/><path d="M647 48l8-8" stroke="#777" stroke-width="2"/>
        <rect x="672.500" y="29.500" width="21" height="20" fill="#b7b9bc" stroke="#1f5f9f"/><rect x="673" y="30" width="14" height="13" fill="#6fa3dc"/><path d="M678 33l12 12" stroke="#0d2c55" stroke-width="2"/><path d="M676 32h7l-7 7zM692 48v-7l-7 7z" fill="#0d2c55"/>
      </svg>
    </div>`;
  }
  private widgetBox() {
    return html`<div class="wbox">
      <div class="dockt">${tx("Widget Box", 68)}<span class="sp"></span>${this.floatClose()}</div>
      <div class="edit">${tx("Filter", 31)}</div>
      <div class="listrow">
        <div class="wlist">${widgetRows.map(([i, t, w]) => i
          ? html`<div class="wrow">${wrap22(icons[i])}${tx(t, w)}</div>`
          : html`<div class="wcat"><svg width="9" height="7"><path d="M1 1h7L4.500 6z" fill="#d2ccc6" stroke="#aaa49d" stroke-width=".6"/></svg><span class="lab">${tx(t, w)}</span></div>`)}
        </div>
        <scroll-bar vertical .before=${302} .thumb=${213}></scroll-bar>
      </div>
    </div>`;
  }
  private dock() {
    const tri = svg`<path d="M0 0h8L4 6.500z" fill="#444"/>`;
    return html`<div class="dock">
      <div class="dockt">${tx("Object Inspector", 98)}<span class="sp"></span>${this.floatClose()}</div>
      <div class="hrow oirow">
        <div class="tab oi">
          <div class="th"><span>${tx("Object", 39)}</span><span>${tx("Class", 32)}</span></div>
          <div class="trow t1"><span class="name n1"><svg width="8" height="7">${tri}</svg>${tx("tabWidget", 62)}</span><span class="cls"><svg width="15" height="11"><rect x=".5" y=".5" width="14" height="10" fill="#222"/><rect x="1" y="3" width="13" height="7" fill="#7fb800"/><path d="M5 1h4v2H5z" fill="#4d86d6"/><path d="M10 1h4v2h-4z" fill="#c22"/></svg>${tx("QTabWidget", 70)}</span></div>
          <div class="trow"><span class="name n2"><svg width="8" height="7">${tri}</svg><svg width="17" height="15" viewBox="0 0 17 15">${[0, 5, 10].map((y) => svg`<rect x="1" y=${y + .5} width="6" height="3.500" fill="#8fb4d8" stroke="#46678a" stroke-width=".8"/><rect x="8" y=${y + .5} width="6" height="3.500" fill="#8fb4d8" stroke="#46678a" stroke-width=".8"/>`)}<circle cx="11.500" cy="10" r="4" fill="#d99" stroke="#a52a2a" stroke-width="2"/><path d="M9 12.500l5-5" stroke="#a52a2a" stroke-width="1.500"/></svg>${tx("tab", 20)}</span><span class="cls"><svg width="15" height="13"><rect x=".5" y=".5" width="14" height="12" fill="#e4e8ec" stroke="#5b8fcc"/><path d="M3 10l6-8M7 11l6-8" stroke="#aab0b6" stroke-width="2"/></svg>${tx("QWidget", 48)}</span></div>
          <div class="trow t3"><span class="name n3">${tx("dial", 21)}</span><span class="cls"><svg width="15" height="15"><circle cx="7.500" cy="8" r="6" fill="#c4a92c" stroke="#8a7216" stroke-width="1.500" stroke-dasharray="2 1"/><path d="M10 5l-1 5-3-3z" fill="#fff8c8"/></svg>${tx("QDial", 34)}</span></div>
        </div>
        <scroll-bar vertical .before=${6} .thumb=${36}></scroll-bar>
      </div>
      <scroll-bar class="hs" .before=${1} .thumb=${123}></scroll-bar>
      <div class="hand"></div>
      <div class="dockt">${tx("Property Editor", 91)}<span class="sp"></span>${this.floatClose()}</div>
      <div class="pe-tools"><div class="edit">${tx("Filter", 31)}</div>
        <svg width="32" height="22" viewBox="0 0 32 22"><path d="M8 1h6v7h7v6h-7v7H8v-7H1V8h7z" fill="#22cc22" stroke="#0b8a0b"/><path d="M9 2h4v7h7v2H2V9h7z" fill="#8bee7a" opacity=".7"/><path d="M24 13h7l-3.500 4z" fill="#777" stroke="#555" stroke-width=".5"/></svg>
        <svg width="44" height="22" viewBox="0 0 44 22"><rect x="11.500" y="8.500" width="21" height="5" fill="#d0cfce" stroke="#9d9b99"/></svg>
        <svg width="34" height="24" viewBox="0 0 34 24"><path d="M3.500 22L15 9" stroke="#555" stroke-width="3.500" stroke-linecap="round"/><path d="M4 21.500L15 9" stroke="#bbb" stroke-width="1.200"/><path d="M18.500 0q-4 2-4 6-1 3 1 5 5 1 9-4l.5-3-4 2-3-2z" fill="#ccc" stroke="#777"/><path d="M26 14h7l-3.500 4z" fill="#777" stroke="#555" stroke-width=".5"/></svg>
      </div>
      <div class="crumb">${tx("dial : QDial", 63)}</div>
      <div class="hrow">
        <div class="tab pe"><div class="th"><span>${tx("Property", 52)}</span><span>${tx("Value", 33)}</span></div>
          ${props.map(([n, w, v, vw, h, ex, c]) => html`<div class="prow ${c}" style=${styleMap({ height: h + "px" })}><span class="k"><span class="ex">${ex ? html`<svg width="8" height="8">${c === "h" ? svg`<path d="M0 1h7L3.500 7z" fill="#bdbab6"/>` : svg`<path d="M1 .5v7l5.500-3.500z" fill="#777" stroke="#333"/>`}</svg>` : nothing}</span>${tx(n, w)}</span><span class="v">${v === "#" ? html`<i class="chk"></i>` : v ? tx(v, vw) : nothing}</span></div>`)}
        </div>
        <scroll-bar vertical .before=${107} .thumb=${78}></scroll-bar>
      </div>
      <scroll-bar class="hs" .before=${1} .thumb=${128}></scroll-bar>
      <div class="hand"></div>
      <div class="dockt">${tx("Resource Browser", 107)}<span class="sp"></span>${this.floatClose()}</div>
      <div class="rb-tools">
        <svg width="24" height="24" viewBox="0 0 24 24"><circle cx="12" cy="12" r="9.300" fill="none" stroke="#b5b3b1" stroke-width="3.500" stroke-dasharray="4.500 2.800"/><circle cx="12" cy="12" r="8.500" fill="#dcdbda" stroke="#aaa"/><circle cx="12" cy="12" r="3.500" fill="#f4f3f2" stroke="#999"/></svg>
        <svg width="34" height="24" viewBox="0 0 34 24"><path d="M29 6.500A8 8 0 1 0 30.500 17" fill="none" stroke="#4a86c5" stroke-width="4.500"/><path d="M27.500 6.500A7 7 0 1 0 29 17" fill="none" stroke="#9cc4ea" stroke-width="1"/><path d="M32 2v9h-9z" fill="#5c98d4" stroke="#3b74b2"/></svg>
        <div class="edit">${tx("Filter", 31)}</div></div>
      <div class="rb"><div class="l"><div class="box">${tx("<resource…", 71)}</div><scroll-bar .before=${1} .thumb=${74}></scroll-bar></div><div class="split"><i></i></div><div class="box r"></div></div>
      <div class="dtabs"><div class="dtab sig">${tx("Signal/S…", 60)}</div><div class="dtab act">${tx("Acti…", 36)}</div><div class="dtab cur">${tx("Resourc…", 60)}</div></div>
    </div>`;
  }
  private win() {
    return html`<div class="win">
      <div class="wtitle">
        <svg width="14" height="16" viewBox="0 0 14 16"><circle cx="7" cy="8" r="6.700" fill="#ef7b52" stroke="#c96a4a" stroke-width=".8"/><path d="M4.500 5.500l5 5M9.500 5.500l-5 5" stroke="#6b2f1a" stroke-width="1.200"/></svg>
        <svg width="14" height="16" viewBox="0 0 14 16"><circle cx="7" cy="8" r="6.500" fill="#f3f0ee" stroke="#c4bdb6"/><path d="M4 8h6" stroke="#8a847e" stroke-width="1.200"/></svg>
        <svg width="14" height="16" viewBox="0 0 14 16"><circle cx="7" cy="8" r="6.500" fill="#f3f0ee" stroke="#c4bdb6"/><rect x="4.500" y="5.500" width="5" height="5" fill="none" stroke="#8a847e"/></svg>
        <b>${tx("Vyadh", 39)}</b>
      </div>
      <div class="mainarea">
        <div class="left">
          <div class="tabsr"><div class="tabx cur"><div class="foc">${tx("Gripper Control", 92)}</div></div><div class="tabx rover">${tx("Rover Control", 82)}</div><div class="tabx blank"></div></div>
          <div class="pane">
            <svg width="80" height="80" viewBox="0 0 80 80">
              <defs><linearGradient id="k" x1="0" y1="0" x2="0.300" y2="1"><stop offset="0" stop-color="#fff"/><stop offset="1" stop-color="#e6e6e5"/></linearGradient><linearGradient id="hl" x1="0" y1="0" x2="0" y2="1"><stop offset="0" stop-color="#fff"/><stop offset="1" stop-color="#f4f4f3"/></linearGradient><radialGradient id="sh"><stop offset=".86" stop-color="#999" stop-opacity=".5"/><stop offset="1" stop-color="#999" stop-opacity="0"/></radialGradient></defs>
              <circle cx="41.500" cy="41.500" r="38" fill="url(#sh)"/>
              <circle cx="40" cy="39.500" r="35.800" fill="url(#k)" stroke="#55514e"/><circle cx="40" cy="39.500" r="34.800" fill="none" stroke="#fff"/>
              <path d="M6 46Q44 54 70 25A33.500 33.500 0 0 0 7 31Q5 38 6 46z" fill="url(#hl)" opacity=".8"/>
              <circle cx="27" cy="60.500" r="6" fill="#dadad9" stroke="#9a9896"/>
            </svg>
          </div>
          <div class="arms">
            <div class="arm first">
              <div class="vals">${tx("Values in", 53)}<br>${tx("degrees", 48)}</div>
              <div><div class="name base">${tx("Base Arm", 56)}</div><div class="spins">${this.spin()}${this.spin()}</div></div>
              <div class="stop">${tx("STOP", 45)}</div>
            </div>
            <div class="arm"><div class="name pad">${tx("2nd Arm", 50)}</div><div class="spins">${this.spin()}${this.spin()}</div></div>
            <div class="arm"><div class="name pad low">${tx("3rd Arm", 48)}</div><div class="spins">${this.spin()}${this.spin()}</div></div>
          </div>
        </div>
        <div class="tele"><b>${tx("Telemetry Data", 103)}</b></div>
      </div>
      <div class="wfill"></div>
      <div class="wstat">${this.grip()}</div>
    </div>`;
  }
  render() {
    return html`${this.panel()}
      <div class="desk">
        <div class="launcher">${launcherOrder.map((k) => this.tile(k))}${this.tile("trash", "bottom")}</div>
        <div class="ide">
          ${this.tools()}
          <div class="cols">
            ${this.widgetBox()}
            <div class="mdi"><div class="sub">
              <div class="subt"><svg width="20" height="19" viewBox="0 0 20 19"><rect x="1.500" y=".5" width="17" height="18" rx="3" fill="#f4f3f2" stroke="#777"/><path d="M7 6l6 7M13 6l-6 7" stroke="#000" stroke-width="2.600"/></svg></div>
              <div class="subm"></div><div class="subc"></div><div class="subs">${this.grip()}</div>
            </div></div>
            ${this.dock()}
          </div>
          <div class="status"></div>
        </div>
      </div>
      ${this.win()}`;
  }
}
